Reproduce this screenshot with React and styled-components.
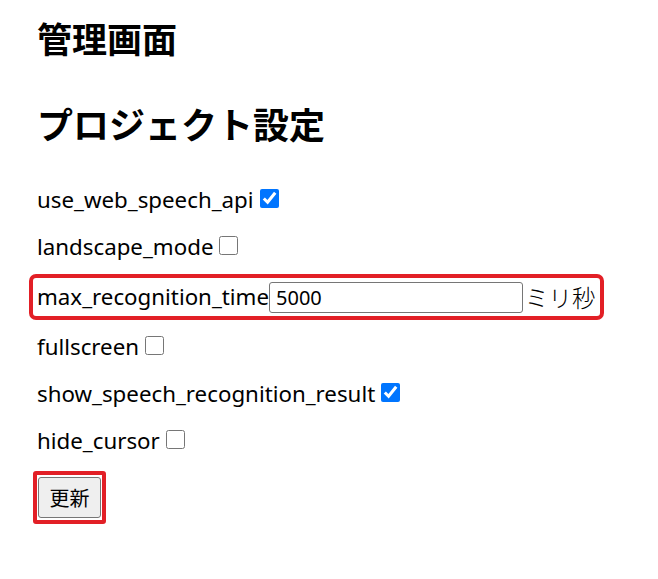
import React from "react";
import styled, { createGlobalStyle } from "styled-components";

const Global = createGlobalStyle`
  html, body { margin: 0; padding: 0; background: #fff; }
  body {
    font-family: "Noto Sans", "Noto Sans CJK JP", sans-serif;
    color: #000;
  }
`;

const Page = styled.main`
  padding: 16px 0 0 37px;
  display: flex;
  flex-direction: column;
  align-items: flex-start;
`;

const Title = styled.h1`
  margin: 0;
  font-family: "Noto Sans CJK JP", sans-serif;
  font-size: 35px;
  font-weight: 700;
  line-height: 44px;
`;

const Section = styled.h2`
  margin: 41px 0 0;
  font-family: "Noto Sans CJK JP", sans-serif;
  font-size: 36px;
  font-weight: 700;
  line-height: 44px;
`;

const Form = styled.form`
  margin-top: 39px;
  display: flex;
  flex-direction: column;
  align-items: flex-start;
  gap: 15px;
`;

const Row = styled.div`
  display: flex;
  align-items: center;
  height: ${(p) => (p.$tall ? 38 : 32)}px;
  font-size: 22.3px;
  line-height: 32px;
  white-space: nowrap;
`;

const Highlight = styled.div`
  margin-left: -4px;
  padding-left: 4px;
  width: 563px;
  outline: 4px solid #e21f26;
  border-radius: 3px;
`;

const Check = styled.input.attrs({ type: "checkbox" })`
  width: 19px;
  height: 19px;
  margin: 0 0 4px 6px;
  accent-color: #0075ff;
`;

const NumberInput = styled.input`
  box-sizing: border-box;
  width: 254px;
  height: 31px;
  margin: 0 2px 0 0;
  padding: 0 6px;
  border: 1px solid #767676;
  border-radius: 3px;
  font-family: "Noto Sans", sans-serif;
  font-size: 20px;
  color: #000;
`;

const Unit = styled.span`
  font-family: "Noto Sans CJK JP", sans-serif;
  font-size: 23.5px;
  font-weight: 300;
`;

const ButtonMark = styled.div`
  margin: -1px 0 0 -4px;
  border: 4px solid #e21f26;
  padding: 2px 1px;
  border-radius: 3px;
  display: flex;
`;

const Button = styled.button`
  box-sizing: border-box;
  width: 63px;
  height: 41px;
  background: #efefef;
  border: 1px solid #767676;
  border-radius: 3px;
  font-family: "Noto Sans CJK JP", sans-serif;
  font-size: 20px;
  color: #000;
  padding: 0;
`;

const settings = [
  { name: "use_web_speech_api", checked: true },
  { name: "landscape_mode", checked: false },
  { name: "max_recognition_time", value: "5000" },
  { name: "fullscreen", checked: false },
  { name: "show_speech_recognition_result", checked: true },
  { name: "hide_cursor", checked: false },
];

export default function App() {
  return (
    <>
      <Global />
      <Page>
        <Title>管理画面</Title>
        <Section>プロジェクト設定</Section>
        <Form onSubmit={(e) => e.preventDefault()}>
          {settings.map((s) =>
            s.value !== undefined ? (
              <Highlight key={s.name}>
                <Row $tall>
                  {s.name}
                  <NumberInput defaultValue={s.value} />
                  <Unit>ミリ秒</Unit>
                </Row>
              </Highlight>
            ) : (
              <Row key={s.name}>
                {s.name}
                <Check defaultChecked={s.checked} />
              </Row>
            )
          )}
          <ButtonMark>
            <Button type="submit">更新</Button>
          </ButtonMark>
        </Form>
      </Page>
    </>
  );
}
